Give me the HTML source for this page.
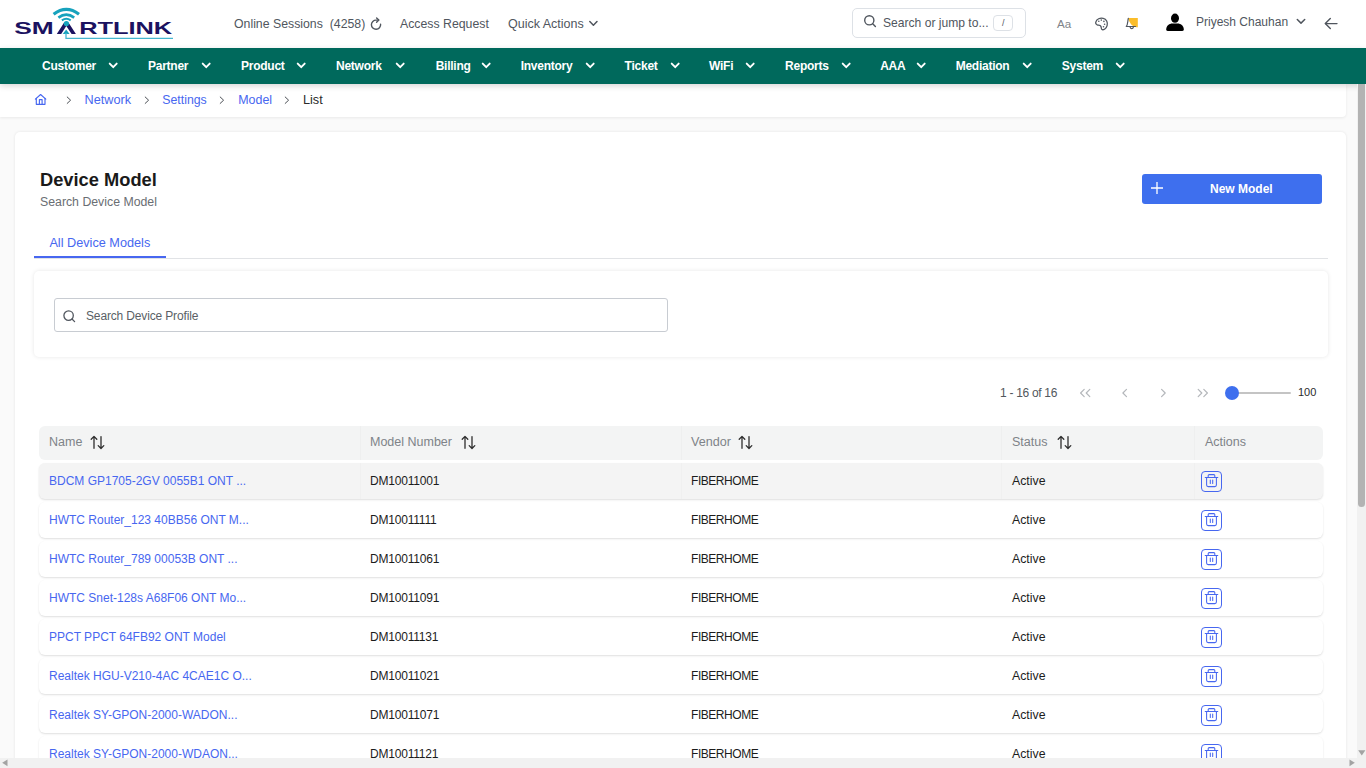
<!DOCTYPE html>
<html><head><meta charset="utf-8">
<style>
*{box-sizing:border-box;margin:0;padding:0}
html,body{width:1366px;height:768px;overflow:hidden;background:#fafafa;font-family:"Liberation Sans", sans-serif;color:#1c1c1c}
.a{position:absolute;white-space:nowrap}
svg.a{overflow:visible}
</style></head><body>
<div class="a" style="left:0px;top:0px;width:1366px;height:48px;background:#fff"></div>
<svg class="a" style="left:0px;top:0px;" width="180" height="48" viewBox="0 0 180 48">
<g fill="#1b1260">
<text x="14.3" y="34" font-family="Liberation Sans" font-weight="700" font-size="16.2" textLength="39.5" lengthAdjust="spacingAndGlyphs">SM</text>
<path d="M56.8 34 L64 22.8 L68.6 22.8 L75.9 34 L71.6 34 L66.3 26 L61.2 34 Z"/>
<text x="79.2" y="34" font-family="Liberation Sans" font-weight="700" font-size="16.2" textLength="93" lengthAdjust="spacingAndGlyphs">RTLINK</text>
</g>
<g fill="#17a2bd">
<path d="M62.7 34 L66.2 29.4 L69.6 34 Z"/>
<circle cx="66.4" cy="23.5" r="2.6"/>
</g>
<g fill="none" stroke="#17a2bd" stroke-linecap="butt">
<path d="M53.6 14.2 Q66.3 4.6 79 14.2" stroke-width="3.2"/>
<path d="M58.4 17.6 Q66.3 11.6 74.2 17.6" stroke-width="2.6"/>
<path d="M61.9 20.4 Q66.3 17.1 70.7 20.4" stroke-width="2.1"/>
</g>
<path d="M66 33 L66 38.3 L173 38.3" fill="none" stroke="#45b6cf" stroke-width="1.3"/>
</svg>
<span class="a" style="left:234px;top:18px;font-size:12.3px;line-height:12.3px;color:#50565e;font-weight:400;">Online Sessions&nbsp; (4258)</span>
<svg class="a" style="left:368px;top:16px;" width="16" height="16" viewBox="0 0 16 16"><g fill="none" stroke="#50565e" stroke-width="1.4" stroke-linecap="round" stroke-linejoin="round"><path d="M12.6 8.3 A4.6 4.6 0 1 1 8.2 4.1 L10.6 4.1"/><path d="M8.6 2 L10.8 4.1 L8.6 6.3"/></g></svg>
<span class="a" style="left:400px;top:18px;font-size:12.3px;line-height:12.3px;color:#50565e;font-weight:400;">Access Request</span>
<span class="a" style="left:508px;top:18px;font-size:12.5px;line-height:12.5px;color:#50565e;font-weight:400;">Quick Actions</span>
<svg class="a" style="left:587px;top:18px;" width="12" height="10" viewBox="0 0 12 10"><path d="M2.8 3.5 L6.4 7.2 L10 3.5" fill="none" stroke="#50565e" stroke-width="1.5" stroke-linecap="round" stroke-linejoin="round"/></svg>
<div class="a" style="left:852px;top:8px;width:174px;height:30px;border:1px solid #dde1e6;border-radius:5px;background:#fff"></div>
<svg class="a" style="left:862px;top:13px;" width="16" height="16" viewBox="0 0 16 16"><g fill="none" stroke="#50565e" stroke-width="1.4" stroke-linecap="round"><circle cx="7.3" cy="7.3" r="4.6"/><path d="M10.7 10.7 L13.4 13.4"/></g></svg>
<span class="a" style="left:883px;top:17px;font-size:12.1px;line-height:12.1px;color:#50565e;font-weight:400;">Search or jump to...</span>
<div class="a" style="left:993px;top:15px;width:20px;height:16px;border:1px solid #dde1e6;border-radius:4px"></div>
<span class="a" style="left:1002px;top:19px;font-size:9px;line-height:9px;color:#50565e;font-weight:400;">/</span>
<span class="a" style="left:1057px;top:18px;font-size:11.6px;line-height:11.6px;color:#808489;font-weight:400;">Aa</span>
<svg class="a" style="left:1093px;top:16px;" width="16" height="16" viewBox="0 0 16 16"><g fill="none" stroke="#50565e" stroke-width="1.3" stroke-linejoin="round"><path d="M2.7 6.3 C3.6 2.8 7.2 1.6 10.2 2.3 C13.4 3.1 15 6.3 14.1 9.7 C13.3 12.7 10.5 14 9.2 13.7 C7.9 13.4 8.6 11.6 7.9 10.4 C7.2 9.2 5.6 9.4 4.2 8.9 C2.9 8.4 2.4 7.6 2.7 6.3 Z"/></g><g fill="#50565e"><circle cx="5.8" cy="5.2" r=".8"/><circle cx="8.3" cy="4.1" r=".8"/><circle cx="10.9" cy="5.4" r=".8"/><circle cx="11.6" cy="8.3" r=".8"/><circle cx="10.5" cy="10.8" r=".8"/></g></svg>
<svg class="a" style="left:1124px;top:16px;" width="16" height="16" viewBox="0 0 16 16"><path d="M4.1 1.9 L13.8 1.9 L13.8 11.2 L12.9 11.2 C8.2 10.6 5.5 7.2 4.1 1.9 Z" fill="#fbbd2a"/><g fill="none" stroke="#50565e" stroke-width="1.2" stroke-linecap="round" stroke-linejoin="round"><path d="M4.3 2.4 C3.6 5.5 3.8 9 2.3 10.5 L11.5 10.5"/><path d="M6.1 11.2 C6.6 13.1 8.9 13.1 9.4 11.2"/></g></svg>
<svg class="a" style="left:1164px;top:12px;" width="22" height="20" viewBox="0 0 22 20"><g fill="#000"><ellipse cx="11" cy="6.2" rx="4" ry="4.6"/><path d="M2.2 17.6 C2.2 13.6 5.6 11.6 8.2 11.6 L13.8 11.6 C16.4 11.6 19.8 13.6 19.8 17.6 C19.8 18.6 19.2 18.9 18.3 18.9 L3.7 18.9 C2.8 18.9 2.2 18.6 2.2 17.6 Z"/></g></svg>
<span class="a" style="left:1196px;top:16px;font-size:12px;line-height:12px;color:#50565e;font-weight:400;">Priyesh Chauhan</span>
<svg class="a" style="left:1294px;top:16px;" width="14" height="10" viewBox="0 0 14 10"><path d="M3.3 3.5 L7 7.1 L10.7 3.5" fill="none" stroke="#50565e" stroke-width="1.5" stroke-linecap="round" stroke-linejoin="round"/></svg>
<svg class="a" style="left:1322px;top:16px;" width="18" height="16" viewBox="0 0 18 16"><g fill="none" stroke="#50565e" stroke-width="1.4" stroke-linecap="round" stroke-linejoin="round"><path d="M3.5 7.6 L15 7.6"/><path d="M8.3 2.6 L3.3 7.6 L8.3 12.6"/></g></svg>
<div class="a" style="left:0px;top:48px;width:1366px;height:36px;background:#00695c;box-shadow:0 2px 6px rgba(0,0,0,.16);z-index:5"></div>
<span class="a" style="left:42px;top:60px;font-size:12px;line-height:12px;color:#fff;font-weight:700;z-index:6;letter-spacing:-0.25px">Customer</span>
<svg class="a" style="left:107.75px;top:61px;z-index:6" width="11" height="9" viewBox="0 0 11 9"><path d="M1.7 2.6 L5.2 6.2 L8.7 2.6" fill="none" stroke="#fff" stroke-width="1.9" stroke-linecap="round" stroke-linejoin="round"/></svg>
<span class="a" style="left:148px;top:60px;font-size:12px;line-height:12px;color:#fff;font-weight:700;z-index:6;letter-spacing:-0.25px">Partner</span>
<svg class="a" style="left:200.5px;top:61px;z-index:6" width="11" height="9" viewBox="0 0 11 9"><path d="M1.7 2.6 L5.2 6.2 L8.7 2.6" fill="none" stroke="#fff" stroke-width="1.9" stroke-linecap="round" stroke-linejoin="round"/></svg>
<span class="a" style="left:241px;top:60px;font-size:12px;line-height:12px;color:#fff;font-weight:700;z-index:6;letter-spacing:-0.25px">Product</span>
<svg class="a" style="left:296px;top:61px;z-index:6" width="11" height="9" viewBox="0 0 11 9"><path d="M1.7 2.6 L5.2 6.2 L8.7 2.6" fill="none" stroke="#fff" stroke-width="1.9" stroke-linecap="round" stroke-linejoin="round"/></svg>
<span class="a" style="left:336px;top:60px;font-size:12px;line-height:12px;color:#fff;font-weight:700;z-index:6;letter-spacing:-0.25px">Network</span>
<svg class="a" style="left:394.7px;top:61px;z-index:6" width="11" height="9" viewBox="0 0 11 9"><path d="M1.7 2.6 L5.2 6.2 L8.7 2.6" fill="none" stroke="#fff" stroke-width="1.9" stroke-linecap="round" stroke-linejoin="round"/></svg>
<span class="a" style="left:435.7px;top:60px;font-size:12px;line-height:12px;color:#fff;font-weight:700;z-index:6;letter-spacing:-0.25px">Billing</span>
<svg class="a" style="left:481.3px;top:61px;z-index:6" width="11" height="9" viewBox="0 0 11 9"><path d="M1.7 2.6 L5.2 6.2 L8.7 2.6" fill="none" stroke="#fff" stroke-width="1.9" stroke-linecap="round" stroke-linejoin="round"/></svg>
<span class="a" style="left:520.7px;top:60px;font-size:12px;line-height:12px;color:#fff;font-weight:700;z-index:6;letter-spacing:-0.25px">Inventory</span>
<svg class="a" style="left:585px;top:61px;z-index:6" width="11" height="9" viewBox="0 0 11 9"><path d="M1.7 2.6 L5.2 6.2 L8.7 2.6" fill="none" stroke="#fff" stroke-width="1.9" stroke-linecap="round" stroke-linejoin="round"/></svg>
<span class="a" style="left:624.6px;top:60px;font-size:12px;line-height:12px;color:#fff;font-weight:700;z-index:6;letter-spacing:-0.25px">Ticket</span>
<svg class="a" style="left:669.9px;top:61px;z-index:6" width="11" height="9" viewBox="0 0 11 9"><path d="M1.7 2.6 L5.2 6.2 L8.7 2.6" fill="none" stroke="#fff" stroke-width="1.9" stroke-linecap="round" stroke-linejoin="round"/></svg>
<span class="a" style="left:709px;top:60px;font-size:12px;line-height:12px;color:#fff;font-weight:700;z-index:6;letter-spacing:-0.25px">WiFi</span>
<svg class="a" style="left:744.8px;top:61px;z-index:6" width="11" height="9" viewBox="0 0 11 9"><path d="M1.7 2.6 L5.2 6.2 L8.7 2.6" fill="none" stroke="#fff" stroke-width="1.9" stroke-linecap="round" stroke-linejoin="round"/></svg>
<span class="a" style="left:785.1px;top:60px;font-size:12px;line-height:12px;color:#fff;font-weight:700;z-index:6;letter-spacing:-0.25px">Reports</span>
<svg class="a" style="left:840.8px;top:61px;z-index:6" width="11" height="9" viewBox="0 0 11 9"><path d="M1.7 2.6 L5.2 6.2 L8.7 2.6" fill="none" stroke="#fff" stroke-width="1.9" stroke-linecap="round" stroke-linejoin="round"/></svg>
<span class="a" style="left:880.2px;top:60px;font-size:12px;line-height:12px;color:#fff;font-weight:700;z-index:6;letter-spacing:-0.25px">AAA</span>
<svg class="a" style="left:916px;top:61px;z-index:6" width="11" height="9" viewBox="0 0 11 9"><path d="M1.7 2.6 L5.2 6.2 L8.7 2.6" fill="none" stroke="#fff" stroke-width="1.9" stroke-linecap="round" stroke-linejoin="round"/></svg>
<span class="a" style="left:955.7px;top:60px;font-size:12px;line-height:12px;color:#fff;font-weight:700;z-index:6;letter-spacing:-0.25px">Mediation</span>
<svg class="a" style="left:1022.4px;top:61px;z-index:6" width="11" height="9" viewBox="0 0 11 9"><path d="M1.7 2.6 L5.2 6.2 L8.7 2.6" fill="none" stroke="#fff" stroke-width="1.9" stroke-linecap="round" stroke-linejoin="round"/></svg>
<span class="a" style="left:1061.8px;top:60px;font-size:12px;line-height:12px;color:#fff;font-weight:700;z-index:6;letter-spacing:-0.25px">System</span>
<svg class="a" style="left:1115.2px;top:61px;z-index:6" width="11" height="9" viewBox="0 0 11 9"><path d="M1.7 2.6 L5.2 6.2 L8.7 2.6" fill="none" stroke="#fff" stroke-width="1.9" stroke-linecap="round" stroke-linejoin="round"/></svg>
<div class="a" style="left:0px;top:84px;width:1346px;height:33px;background:#fff;border-radius:0 0 4px 0;box-shadow:0 1px 3px rgba(0,0,0,.07);z-index:4"></div>
<svg class="a" style="left:33px;top:92px;z-index:5" width="16" height="16" viewBox="0 0 16 16"><g fill="none" stroke="#4767f0" stroke-width="1.15" stroke-linejoin="round" stroke-linecap="round"><path d="M2.4 7.1 L7.6 2.5 L12.8 7.1"/><path d="M3.3 6.3 L3.3 12.3 L12 12.3 L12 6.3"/><path d="M6.4 12.3 L6.4 7.6 L9.1 7.6 L9.1 12.3"/></g></svg>
<svg class="a" style="left:64px;top:94px;z-index:5" width="10" height="12" viewBox="0 0 10 12"><path d="M3.2 3 L6.6 6.2 L3.2 9.4" fill="none" stroke="#4b4f55" stroke-width="1" stroke-linecap="round" stroke-linejoin="round"/></svg>
<svg class="a" style="left:142.2px;top:94px;z-index:5" width="10" height="12" viewBox="0 0 10 12"><path d="M3.2 3 L6.6 6.2 L3.2 9.4" fill="none" stroke="#4b4f55" stroke-width="1" stroke-linecap="round" stroke-linejoin="round"/></svg>
<svg class="a" style="left:217.3px;top:94px;z-index:5" width="10" height="12" viewBox="0 0 10 12"><path d="M3.2 3 L6.6 6.2 L3.2 9.4" fill="none" stroke="#4b4f55" stroke-width="1" stroke-linecap="round" stroke-linejoin="round"/></svg>
<svg class="a" style="left:282.4px;top:94px;z-index:5" width="10" height="12" viewBox="0 0 10 12"><path d="M3.2 3 L6.6 6.2 L3.2 9.4" fill="none" stroke="#4b4f55" stroke-width="1" stroke-linecap="round" stroke-linejoin="round"/></svg>
<span class="a" style="left:84.5px;top:94px;font-size:12.7px;line-height:12.7px;color:#4767f0;font-weight:400;z-index:5">Network</span>
<span class="a" style="left:162.3px;top:94px;font-size:12.3px;line-height:12.3px;color:#4767f0;font-weight:400;z-index:5">Settings</span>
<span class="a" style="left:238.3px;top:94px;font-size:12.4px;line-height:12.4px;color:#4767f0;font-weight:400;z-index:5">Model</span>
<span class="a" style="left:303px;top:94px;font-size:12.7px;line-height:12.7px;color:#2b2b2b;font-weight:400;z-index:5">List</span>
<div class="a" style="left:15px;top:132px;width:1331px;height:700px;background:#fff;border-radius:5px;box-shadow:0 0 3px rgba(0,0,0,.09)"></div>
<span class="a" style="left:40px;top:171px;font-size:18.3px;line-height:18.3px;color:#1a1a1a;font-weight:700;">Device Model</span>
<span class="a" style="left:40px;top:196px;font-size:12.3px;line-height:12.3px;color:#6a6e73;font-weight:400;">Search Device Model</span>
<div class="a" style="left:1142px;top:174px;width:180px;height:30px;background:#3e6fee;border-radius:3px"></div>
<svg class="a" style="left:1150px;top:181px;" width="14" height="14" viewBox="0 0 14 14"><path d="M7 1 L7 13 M1 7 L13 7" stroke="#fff" stroke-width="1.3" fill="none"/></svg>
<span class="a" style="left:1210px;top:183px;font-size:12px;line-height:12px;color:#fff;font-weight:700;">New Model</span>
<span class="a" style="left:49.4px;top:237px;font-size:12.7px;line-height:12.7px;color:#4767f0;font-weight:400;">All Device Models</span>
<div class="a" style="left:34px;top:258px;width:1294px;height:1px;background:#e1e3e6"></div>
<div class="a" style="left:34px;top:256px;width:132px;height:2px;background:#4767f0"></div>
<div class="a" style="left:34px;top:271px;width:1294px;height:86px;background:#fff;border-radius:5px;box-shadow:0 0 4px rgba(0,0,0,.10)"></div>
<div class="a" style="left:54px;top:298px;width:614px;height:34px;border:1px solid #c8ccd2;border-radius:3px"></div>
<svg class="a" style="left:61px;top:308px;" width="16" height="16" viewBox="0 0 16 16"><g fill="none" stroke="#50565e" stroke-width="1.3" stroke-linecap="round"><circle cx="7.6" cy="7.6" r="4.7"/><path d="M11 11 L13.6 13.6"/></g></svg>
<span class="a" style="left:86px;top:310px;font-size:12px;line-height:12px;color:#5a5f66;font-weight:400;letter-spacing:-0.15px">Search Device Profile</span>
<span class="a" style="left:1000px;top:387px;font-size:12px;line-height:12px;color:#52575d;font-weight:400;letter-spacing:-0.3px">1 - 16 of 16</span>
<svg class="a" style="left:1076px;top:385px;" width="18" height="16" viewBox="0 0 18 16"><g fill="none" stroke="#b4b7bb" stroke-width="1.2" stroke-linecap="round" stroke-linejoin="round"><path d="M8.2 4.4 L4.6 8 L8.2 11.6"/><path d="M13.8 4.4 L10.2 8 L13.8 11.6"/></g></svg>
<svg class="a" style="left:1116px;top:385px;" width="16" height="16" viewBox="0 0 16 16"><path d="M10.5 4.4 L6.9 8 L10.5 11.6" fill="none" stroke="#b4b7bb" stroke-width="1.2" stroke-linecap="round" stroke-linejoin="round"/></svg>
<svg class="a" style="left:1156px;top:385px;" width="16" height="16" viewBox="0 0 16 16"><path d="M5.6 4.4 L9.2 8 L5.6 11.6" fill="none" stroke="#b4b7bb" stroke-width="1.2" stroke-linecap="round" stroke-linejoin="round"/></svg>
<svg class="a" style="left:1194px;top:385px;" width="18" height="16" viewBox="0 0 18 16"><g fill="none" stroke="#b4b7bb" stroke-width="1.2" stroke-linecap="round" stroke-linejoin="round"><path d="M4.2 4.4 L7.8 8 L4.2 11.6"/><path d="M9.8 4.4 L13.4 8 L9.8 11.6"/></g></svg>
<div class="a" style="left:1236px;top:392px;width:55px;height:2px;background:#c4c4c4;border-radius:1px"></div>
<div class="a" style="left:1224.5px;top:386px;width:14px;height:14px;background:#3e6fee;border-radius:50%"></div>
<span class="a" style="left:1298px;top:387px;font-size:11px;line-height:11px;color:#2b2b2b;font-weight:400;">100</span>
<div class="a" style="left:39px;top:426px;width:1284px;height:34px;background:#f3f4f4;border-radius:6px"></div>
<div class="a" style="left:360px;top:426px;width:1px;height:34px;background:#eeefef"></div>
<div class="a" style="left:681px;top:426px;width:1px;height:34px;background:#eeefef"></div>
<div class="a" style="left:1001px;top:426px;width:1px;height:34px;background:#eeefef"></div>
<div class="a" style="left:1194px;top:426px;width:1px;height:34px;background:#eeefef"></div>
<span class="a" style="left:49px;top:436px;font-size:12.5px;line-height:12.5px;color:#7e8388;font-weight:400;">Name</span>
<svg class="a" style="left:90px;top:434px;" width="15" height="17" viewBox="0 0 15 17"><g fill="none" stroke="#2e2e2e" stroke-width="1.3" stroke-linecap="round" stroke-linejoin="round"><path d="M4 2.6 L4 14.3 M1.2 5.3 L4 2.4 L6.8 5.3"/><path d="M11 2.6 L11 14.3 M8.2 11.6 L11 14.5 L13.8 11.6"/></g></svg>
<span class="a" style="left:370px;top:436px;font-size:12.5px;line-height:12.5px;color:#7e8388;font-weight:400;">Model Number</span>
<svg class="a" style="left:461px;top:434px;" width="15" height="17" viewBox="0 0 15 17"><g fill="none" stroke="#2e2e2e" stroke-width="1.3" stroke-linecap="round" stroke-linejoin="round"><path d="M4 2.6 L4 14.3 M1.2 5.3 L4 2.4 L6.8 5.3"/><path d="M11 2.6 L11 14.3 M8.2 11.6 L11 14.5 L13.8 11.6"/></g></svg>
<span class="a" style="left:691px;top:436px;font-size:12.6px;line-height:12.6px;color:#7e8388;font-weight:400;">Vendor</span>
<svg class="a" style="left:738px;top:434px;" width="15" height="17" viewBox="0 0 15 17"><g fill="none" stroke="#2e2e2e" stroke-width="1.3" stroke-linecap="round" stroke-linejoin="round"><path d="M4 2.6 L4 14.3 M1.2 5.3 L4 2.4 L6.8 5.3"/><path d="M11 2.6 L11 14.3 M8.2 11.6 L11 14.5 L13.8 11.6"/></g></svg>
<span class="a" style="left:1012px;top:436px;font-size:12.5px;line-height:12.5px;color:#7e8388;font-weight:400;">Status</span>
<svg class="a" style="left:1057px;top:434px;" width="15" height="17" viewBox="0 0 15 17"><g fill="none" stroke="#2e2e2e" stroke-width="1.3" stroke-linecap="round" stroke-linejoin="round"><path d="M4 2.6 L4 14.3 M1.2 5.3 L4 2.4 L6.8 5.3"/><path d="M11 2.6 L11 14.3 M8.2 11.6 L11 14.5 L13.8 11.6"/></g></svg>
<span class="a" style="left:1205px;top:436px;font-size:12.5px;line-height:12.5px;color:#7e8388;font-weight:400;">Actions</span>
<div class="a" style="left:39px;top:463px;width:1284px;height:36px;background:#f4f4f4;border-radius:6px;box-shadow:0 1px 2px rgba(0,0,0,.13)"></div>
<div class="a" style="left:360px;top:463px;width:1px;height:36px;background:#f0f0f0"></div>
<div class="a" style="left:681px;top:463px;width:1px;height:36px;background:#f0f0f0"></div>
<div class="a" style="left:1001px;top:463px;width:1px;height:36px;background:#f0f0f0"></div>
<div class="a" style="left:1194px;top:463px;width:1px;height:36px;background:#f0f0f0"></div>
<span class="a" style="left:49px;top:475px;font-size:12px;line-height:12px;color:#4767f0;font-weight:400;">BDCM GP1705-2GV 0055B1 ONT ...</span>
<span class="a" style="left:370px;top:475px;font-size:12px;line-height:12px;color:#1c1c1c;font-weight:400;letter-spacing:-0.2px">DM10011001</span>
<span class="a" style="left:691px;top:475px;font-size:12px;line-height:12px;color:#1c1c1c;font-weight:400;letter-spacing:-0.45px">FIBERHOME</span>
<span class="a" style="left:1012px;top:475px;font-size:12.3px;line-height:12.3px;color:#1c1c1c;font-weight:400;">Active</span>
<div class="a" style="left:1201px;top:471px;width:21px;height:21px;border:1px solid #4767f0;border-radius:4px"></div>
<svg class="a" style="left:1201px;top:471px;" width="21" height="21" viewBox="0 0 21 21"><g fill="none" stroke="#4767f0" stroke-width="1.05" stroke-linecap="round" stroke-linejoin="round"><path d="M4.2 6.4 L16.8 6.4"/><path d="M7.2 6.4 L7.2 4.6 Q7.2 3.6 8.2 3.6 L12.8 3.6 Q13.8 3.6 13.8 4.6 L13.8 6.4"/><path d="M5.6 6.4 L5.6 14 Q5.6 15.6 7.2 15.6 L13.8 15.6 Q15.4 15.6 15.4 14 L15.4 6.4"/><path d="M9.3 8.9 L9.3 12.4 M11.7 8.9 L11.7 12.4"/></g></svg>
<div class="a" style="left:39px;top:502px;width:1284px;height:36px;background:#fff;border-radius:6px;box-shadow:0 1px 2px rgba(0,0,0,.13)"></div>
<span class="a" style="left:49px;top:514px;font-size:12px;line-height:12px;color:#4767f0;font-weight:400;">HWTC Router_123 40BB56 ONT M...</span>
<span class="a" style="left:370px;top:514px;font-size:12px;line-height:12px;color:#1c1c1c;font-weight:400;letter-spacing:-0.2px">DM10011111</span>
<span class="a" style="left:691px;top:514px;font-size:12px;line-height:12px;color:#1c1c1c;font-weight:400;letter-spacing:-0.45px">FIBERHOME</span>
<span class="a" style="left:1012px;top:514px;font-size:12.3px;line-height:12.3px;color:#1c1c1c;font-weight:400;">Active</span>
<div class="a" style="left:1201px;top:510px;width:21px;height:21px;border:1px solid #4767f0;border-radius:4px"></div>
<svg class="a" style="left:1201px;top:510px;" width="21" height="21" viewBox="0 0 21 21"><g fill="none" stroke="#4767f0" stroke-width="1.05" stroke-linecap="round" stroke-linejoin="round"><path d="M4.2 6.4 L16.8 6.4"/><path d="M7.2 6.4 L7.2 4.6 Q7.2 3.6 8.2 3.6 L12.8 3.6 Q13.8 3.6 13.8 4.6 L13.8 6.4"/><path d="M5.6 6.4 L5.6 14 Q5.6 15.6 7.2 15.6 L13.8 15.6 Q15.4 15.6 15.4 14 L15.4 6.4"/><path d="M9.3 8.9 L9.3 12.4 M11.7 8.9 L11.7 12.4"/></g></svg>
<div class="a" style="left:39px;top:541px;width:1284px;height:36px;background:#fff;border-radius:6px;box-shadow:0 1px 2px rgba(0,0,0,.13)"></div>
<span class="a" style="left:49px;top:553px;font-size:12px;line-height:12px;color:#4767f0;font-weight:400;">HWTC Router_789 00053B ONT ...</span>
<span class="a" style="left:370px;top:553px;font-size:12px;line-height:12px;color:#1c1c1c;font-weight:400;letter-spacing:-0.2px">DM10011061</span>
<span class="a" style="left:691px;top:553px;font-size:12px;line-height:12px;color:#1c1c1c;font-weight:400;letter-spacing:-0.45px">FIBERHOME</span>
<span class="a" style="left:1012px;top:553px;font-size:12.3px;line-height:12.3px;color:#1c1c1c;font-weight:400;">Active</span>
<div class="a" style="left:1201px;top:549px;width:21px;height:21px;border:1px solid #4767f0;border-radius:4px"></div>
<svg class="a" style="left:1201px;top:549px;" width="21" height="21" viewBox="0 0 21 21"><g fill="none" stroke="#4767f0" stroke-width="1.05" stroke-linecap="round" stroke-linejoin="round"><path d="M4.2 6.4 L16.8 6.4"/><path d="M7.2 6.4 L7.2 4.6 Q7.2 3.6 8.2 3.6 L12.8 3.6 Q13.8 3.6 13.8 4.6 L13.8 6.4"/><path d="M5.6 6.4 L5.6 14 Q5.6 15.6 7.2 15.6 L13.8 15.6 Q15.4 15.6 15.4 14 L15.4 6.4"/><path d="M9.3 8.9 L9.3 12.4 M11.7 8.9 L11.7 12.4"/></g></svg>
<div class="a" style="left:39px;top:580px;width:1284px;height:36px;background:#fff;border-radius:6px;box-shadow:0 1px 2px rgba(0,0,0,.13)"></div>
<span class="a" style="left:49px;top:592px;font-size:12px;line-height:12px;color:#4767f0;font-weight:400;">HWTC Snet-128s A68F06 ONT Mo...</span>
<span class="a" style="left:370px;top:592px;font-size:12px;line-height:12px;color:#1c1c1c;font-weight:400;letter-spacing:-0.2px">DM10011091</span>
<span class="a" style="left:691px;top:592px;font-size:12px;line-height:12px;color:#1c1c1c;font-weight:400;letter-spacing:-0.45px">FIBERHOME</span>
<span class="a" style="left:1012px;top:592px;font-size:12.3px;line-height:12.3px;color:#1c1c1c;font-weight:400;">Active</span>
<div class="a" style="left:1201px;top:588px;width:21px;height:21px;border:1px solid #4767f0;border-radius:4px"></div>
<svg class="a" style="left:1201px;top:588px;" width="21" height="21" viewBox="0 0 21 21"><g fill="none" stroke="#4767f0" stroke-width="1.05" stroke-linecap="round" stroke-linejoin="round"><path d="M4.2 6.4 L16.8 6.4"/><path d="M7.2 6.4 L7.2 4.6 Q7.2 3.6 8.2 3.6 L12.8 3.6 Q13.8 3.6 13.8 4.6 L13.8 6.4"/><path d="M5.6 6.4 L5.6 14 Q5.6 15.6 7.2 15.6 L13.8 15.6 Q15.4 15.6 15.4 14 L15.4 6.4"/><path d="M9.3 8.9 L9.3 12.4 M11.7 8.9 L11.7 12.4"/></g></svg>
<div class="a" style="left:39px;top:619px;width:1284px;height:36px;background:#fff;border-radius:6px;box-shadow:0 1px 2px rgba(0,0,0,.13)"></div>
<span class="a" style="left:49px;top:631px;font-size:12px;line-height:12px;color:#4767f0;font-weight:400;">PPCT PPCT 64FB92 ONT Model</span>
<span class="a" style="left:370px;top:631px;font-size:12px;line-height:12px;color:#1c1c1c;font-weight:400;letter-spacing:-0.2px">DM10011131</span>
<span class="a" style="left:691px;top:631px;font-size:12px;line-height:12px;color:#1c1c1c;font-weight:400;letter-spacing:-0.45px">FIBERHOME</span>
<span class="a" style="left:1012px;top:631px;font-size:12.3px;line-height:12.3px;color:#1c1c1c;font-weight:400;">Active</span>
<div class="a" style="left:1201px;top:627px;width:21px;height:21px;border:1px solid #4767f0;border-radius:4px"></div>
<svg class="a" style="left:1201px;top:627px;" width="21" height="21" viewBox="0 0 21 21"><g fill="none" stroke="#4767f0" stroke-width="1.05" stroke-linecap="round" stroke-linejoin="round"><path d="M4.2 6.4 L16.8 6.4"/><path d="M7.2 6.4 L7.2 4.6 Q7.2 3.6 8.2 3.6 L12.8 3.6 Q13.8 3.6 13.8 4.6 L13.8 6.4"/><path d="M5.6 6.4 L5.6 14 Q5.6 15.6 7.2 15.6 L13.8 15.6 Q15.4 15.6 15.4 14 L15.4 6.4"/><path d="M9.3 8.9 L9.3 12.4 M11.7 8.9 L11.7 12.4"/></g></svg>
<div class="a" style="left:39px;top:658px;width:1284px;height:36px;background:#fff;border-radius:6px;box-shadow:0 1px 2px rgba(0,0,0,.13)"></div>
<span class="a" style="left:49px;top:670px;font-size:12px;line-height:12px;color:#4767f0;font-weight:400;">Realtek HGU-V210-4AC 4CAE1C O...</span>
<span class="a" style="left:370px;top:670px;font-size:12px;line-height:12px;color:#1c1c1c;font-weight:400;letter-spacing:-0.2px">DM10011021</span>
<span class="a" style="left:691px;top:670px;font-size:12px;line-height:12px;color:#1c1c1c;font-weight:400;letter-spacing:-0.45px">FIBERHOME</span>
<span class="a" style="left:1012px;top:670px;font-size:12.3px;line-height:12.3px;color:#1c1c1c;font-weight:400;">Active</span>
<div class="a" style="left:1201px;top:666px;width:21px;height:21px;border:1px solid #4767f0;border-radius:4px"></div>
<svg class="a" style="left:1201px;top:666px;" width="21" height="21" viewBox="0 0 21 21"><g fill="none" stroke="#4767f0" stroke-width="1.05" stroke-linecap="round" stroke-linejoin="round"><path d="M4.2 6.4 L16.8 6.4"/><path d="M7.2 6.4 L7.2 4.6 Q7.2 3.6 8.2 3.6 L12.8 3.6 Q13.8 3.6 13.8 4.6 L13.8 6.4"/><path d="M5.6 6.4 L5.6 14 Q5.6 15.6 7.2 15.6 L13.8 15.6 Q15.4 15.6 15.4 14 L15.4 6.4"/><path d="M9.3 8.9 L9.3 12.4 M11.7 8.9 L11.7 12.4"/></g></svg>
<div class="a" style="left:39px;top:697px;width:1284px;height:36px;background:#fff;border-radius:6px;box-shadow:0 1px 2px rgba(0,0,0,.13)"></div>
<span class="a" style="left:49px;top:709px;font-size:12px;line-height:12px;color:#4767f0;font-weight:400;">Realtek SY-GPON-2000-WADON...</span>
<span class="a" style="left:370px;top:709px;font-size:12px;line-height:12px;color:#1c1c1c;font-weight:400;letter-spacing:-0.2px">DM10011071</span>
<span class="a" style="left:691px;top:709px;font-size:12px;line-height:12px;color:#1c1c1c;font-weight:400;letter-spacing:-0.45px">FIBERHOME</span>
<span class="a" style="left:1012px;top:709px;font-size:12.3px;line-height:12.3px;color:#1c1c1c;font-weight:400;">Active</span>
<div class="a" style="left:1201px;top:705px;width:21px;height:21px;border:1px solid #4767f0;border-radius:4px"></div>
<svg class="a" style="left:1201px;top:705px;" width="21" height="21" viewBox="0 0 21 21"><g fill="none" stroke="#4767f0" stroke-width="1.05" stroke-linecap="round" stroke-linejoin="round"><path d="M4.2 6.4 L16.8 6.4"/><path d="M7.2 6.4 L7.2 4.6 Q7.2 3.6 8.2 3.6 L12.8 3.6 Q13.8 3.6 13.8 4.6 L13.8 6.4"/><path d="M5.6 6.4 L5.6 14 Q5.6 15.6 7.2 15.6 L13.8 15.6 Q15.4 15.6 15.4 14 L15.4 6.4"/><path d="M9.3 8.9 L9.3 12.4 M11.7 8.9 L11.7 12.4"/></g></svg>
<div class="a" style="left:39px;top:736px;width:1284px;height:36px;background:#fff;border-radius:6px;box-shadow:0 1px 2px rgba(0,0,0,.13)"></div>
<span class="a" style="left:49px;top:748px;font-size:12px;line-height:12px;color:#4767f0;font-weight:400;">Realtek SY-GPON-2000-WDAON...</span>
<span class="a" style="left:370px;top:748px;font-size:12px;line-height:12px;color:#1c1c1c;font-weight:400;letter-spacing:-0.2px">DM10011121</span>
<span class="a" style="left:691px;top:748px;font-size:12px;line-height:12px;color:#1c1c1c;font-weight:400;letter-spacing:-0.45px">FIBERHOME</span>
<span class="a" style="left:1012px;top:748px;font-size:12.3px;line-height:12.3px;color:#1c1c1c;font-weight:400;">Active</span>
<div class="a" style="left:1201px;top:744px;width:21px;height:21px;border:1px solid #4767f0;border-radius:4px"></div>
<svg class="a" style="left:1201px;top:744px;" width="21" height="21" viewBox="0 0 21 21"><g fill="none" stroke="#4767f0" stroke-width="1.05" stroke-linecap="round" stroke-linejoin="round"><path d="M4.2 6.4 L16.8 6.4"/><path d="M7.2 6.4 L7.2 4.6 Q7.2 3.6 8.2 3.6 L12.8 3.6 Q13.8 3.6 13.8 4.6 L13.8 6.4"/><path d="M5.6 6.4 L5.6 14 Q5.6 15.6 7.2 15.6 L13.8 15.6 Q15.4 15.6 15.4 14 L15.4 6.4"/><path d="M9.3 8.9 L9.3 12.4 M11.7 8.9 L11.7 12.4"/></g></svg>
<div class="a" style="left:0px;top:758px;width:1357px;height:10px;background:#f1f1f1;z-index:10"></div>
<svg class="a" style="left:1px;top:758px;z-index:11" width="8" height="10" viewBox="0 0 8 10"><path d="M1.2 4.8 L6.5 1.4 L6.5 8.2 Z" fill="#a3a3a3"/></svg>
<svg class="a" style="left:1348px;top:758px;z-index:11" width="8" height="10" viewBox="0 0 8 10"><path d="M6.8 4.8 L1.5 1.4 L1.5 8.2 Z" fill="#a3a3a3"/></svg>
<div class="a" style="left:1357px;top:84px;width:9px;height:684px;background:#f1f1f1;z-index:10"></div>
<div class="a" style="left:1357.5px;top:84px;width:7px;height:423px;background:#b3b3b3;border-radius:0 0 4px 4px;z-index:11"></div>
<svg class="a" style="left:1357px;top:748px;z-index:11" width="10" height="9" viewBox="0 0 10 9"><path d="M4.8 7.6 L1.2 2.2 L8.4 2.2 Z" fill="#a3a3a3"/></svg>
<div class="a" style="left:1357px;top:758px;width:9px;height:10px;background:#f1f1f1;z-index:10"></div>
</body></html>
